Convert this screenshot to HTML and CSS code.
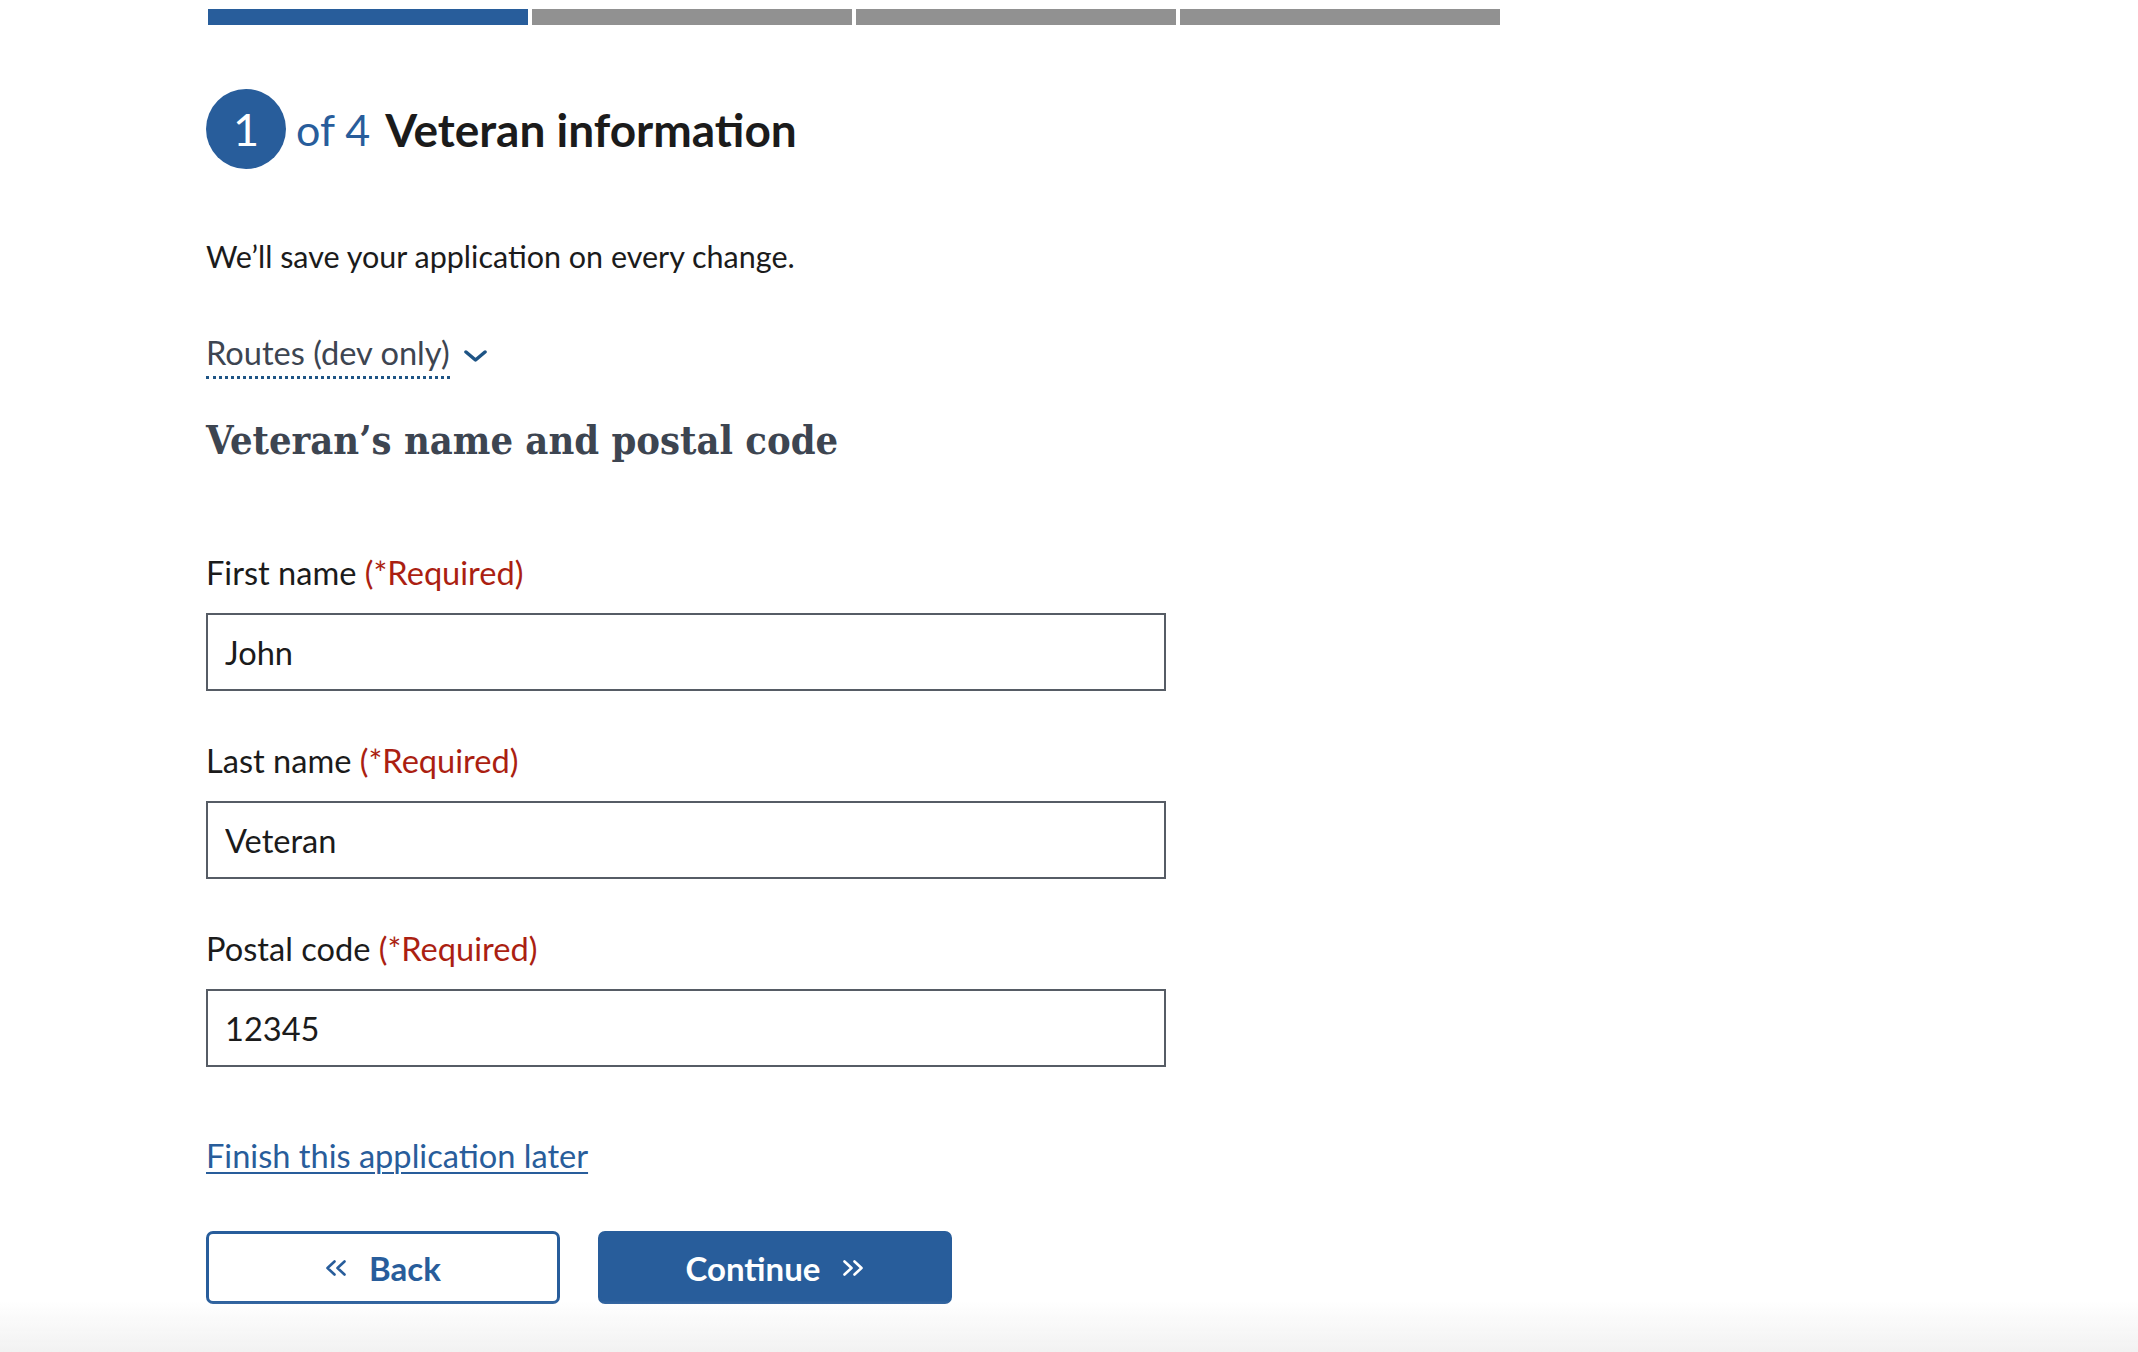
FILE: index.html
```html
<!DOCTYPE html>
<html lang="en">
<head>
<meta charset="utf-8">
<title>Veteran information</title>
<link rel="stylesheet" href="styles.css">
</head>
<body>
<main class="page">
  <div class="progress">
    <span class="seg seg-active"></span>
    <span class="seg"></span>
    <span class="seg"></span>
    <span class="seg"></span>
  </div>
  <div class="step-head">
    <span class="step-num">1</span>
    <span class="step-of">of 4</span>
    <h1 class="step-title">Veteran information</h1>
  </div>
  <p class="save-note">We’ll save your application on every change.</p>
  <div class="routes">
    <span class="routes-label">Routes (dev only)</span>
    <svg class="routes-chev" width="23" height="12" viewBox="0 0 23 12"><path d="M2 2 L11.5 10 L21 2" fill="none" stroke="#1e5485" stroke-width="3.5" stroke-linecap="round" stroke-linejoin="round"/></svg>
  </div>
  <h2 class="section-title">Veteran’s name and postal code</h2>
  <form class="fields">
    <div class="field">
      <label class="label">First name <span class="req">(*Required)</span></label>
      <input class="input" type="text" value="John">
    </div>
    <div class="field">
      <label class="label">Last name <span class="req">(*Required)</span></label>
      <input class="input" type="text" value="Veteran">
    </div>
    <div class="field">
      <label class="label">Postal code <span class="req">(*Required)</span></label>
      <input class="input" type="text" value="12345">
    </div>
  </form>
  <a class="later" href="#">Finish this application later</a>
  <div class="actions">
    <button class="btn btn-back" type="button">
      <svg class="chev" width="22" height="16" viewBox="0 0 22 16"><path d="M9.5 1.5 L2.5 8 L9.5 14.5 M19.5 1.5 L12.5 8 L19.5 14.5" fill="none" stroke="currentColor" stroke-width="2.6" stroke-linecap="round" stroke-linejoin="round"/></svg>
      <span>Back</span>
    </button>
    <button class="btn btn-continue" type="button">
      <span>Continue</span>
      <svg class="chev" width="22" height="16" viewBox="0 0 22 16"><path d="M2.5 1.5 L9.5 8 L2.5 14.5 M12.5 1.5 L19.5 8 L12.5 14.5" fill="none" stroke="currentColor" stroke-width="2.6" stroke-linecap="round" stroke-linejoin="round"/></svg>
    </button>
  </div>
</main>
<div class="bottom-fade"></div>
</body>
</html>
```

FILE: styles.css
```css
html, body {
  margin: 0;
  padding: 0;
  background: #ffffff;
}
body {
  font-family: Lato, "Noto Sans", sans-serif;
  color: #1b1b1b;
}
.page {
  margin-left: 206px;
  width: 1294px;
  padding-top: 9px;
}
.progress {
  display: flex;
  gap: 4px;
  margin-left: 2px;
}
.seg {
  flex: 1;
  height: 16px;
  background: #919191;
}
.seg-active {
  background: #285d9b;
}
.step-head {
  display: flex;
  align-items: center;
  margin-top: 64px;
  height: 80px;
}
.step-num {
  width: 80px;
  height: 80px;
  border-radius: 50%;
  background: #285d9b;
  color: #fff;
  font-size: 45px;
  display: flex;
  align-items: center;
  justify-content: center;
}
.step-of {
  margin-left: 10px;
  font-size: 43px;
  color: #285d9b;
}
.step-title {
  margin: 0 0 0 15px;
  font-size: 46px;
  font-weight: 700;
  color: #1b1b1b;
}
.save-note {
  margin: 61px 0 0;
  font-size: 30.5px;
  line-height: 52px;
}
.routes {
  display: flex;
  align-items: center;
  gap: 14px;
  margin-top: 50px;
}
.routes-label {
  font-size: 32.6px;
  color: #3d4551;
  line-height: 42px;
  padding-bottom: 2px;
  border-bottom: 3px dotted #1e5485;
}
.section-title {
  margin: 35px 0 0;
  font-family: "DejaVu Serif Condensed", "DejaVu Serif", serif;
  font-size: 39.5px;
  font-weight: 700;
  color: #3d4551;
  line-height: 52px;
}
.fields {
  margin-top: 84px;
  display: flex;
  flex-direction: column;
  gap: 47px;
  width: 960px;
}
.field {
  display: flex;
  flex-direction: column;
}
.label {
  font-size: 32.6px;
  line-height: 46px;
  margin-bottom: 17px;
}
.req {
  color: #ab1f12;
}
.input {
  box-sizing: border-box;
  height: 78px;
  width: 960px;
  border: 2px solid #565c65;
  padding: 0 17px;
  font-family: inherit;
  font-size: 32.6px;
  color: #1b1b1b;
  background: #fff;
  outline: none;
}
.later {
  display: inline-block;
  margin-top: 66px;
  font-size: 32.6px;
  line-height: 46px;
  color: #285d9b;
  text-decoration: underline;
  text-underline-offset: 4px;
  text-decoration-thickness: 2px;
}
.actions {
  display: flex;
  gap: 38px;
  margin-top: 52px;
}
.btn {
  box-sizing: border-box;
  width: 354px;
  height: 73px;
  border-radius: 7px;
  border: 3px solid #285d9b;
  font-family: inherit;
  font-size: 33px;
  font-weight: 700;
  display: flex;
  align-items: center;
  justify-content: center;
  gap: 22px;
  cursor: pointer;
}
.chev {
  flex: none;
}
.btn-back {
  background: #fff;
  color: #285d9b;
}
.btn-continue {
  background: #285d9b;
  color: #fff;
}
.bottom-fade {
  position: fixed;
  left: 0;
  right: 0;
  bottom: 0;
  height: 52px;
  background: linear-gradient(to bottom, rgba(242,242,242,0), #f2f2f2);
  pointer-events: none;
}
```
